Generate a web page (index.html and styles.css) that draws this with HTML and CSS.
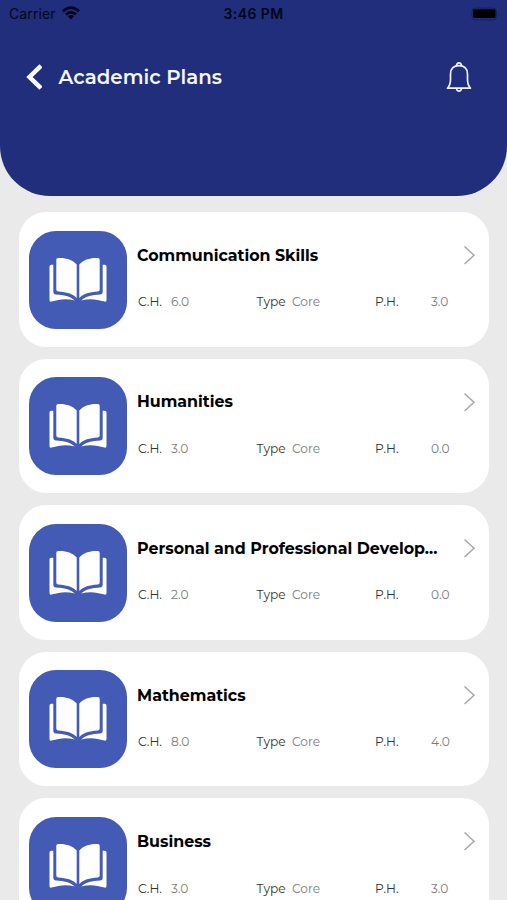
FILE: index.html
```
<!DOCTYPE html>
<html lang="en">
<head>
<meta charset="utf-8">
<title>Academic Plans</title>
<link rel="stylesheet" href="styles.css">
</head>
<body>
<svg width="0" height="0" class="defs">
  <symbol id="book" viewBox="0 0 98 98">
    <path d="M27.300 29q0-1.800 1.800-1.900c7-.6 13.900 1.400 18.600 6.400v33.500c-4-4.200-10-6-18.400-6.500q-2-.1-2-2z"/>
    <path d="M70.700 29q0-1.800-1.800-1.900c-7-.6-13.900 1.400-18.600 6.400v33.500c4-4.200 10-6 18.400-6.500q2-.1 2-2z"/>
    <path d="M20.500 35.500q0-1.800 1.800-1.800h2v26.700q0 2.800 2.700 3.100c8 .6 14 1.400 18.800 6-8-2.200-15-1.600-23.300 1.100q-2 .5-2-1.500z"/>
    <path d="M77.500 35.500q0-1.800-1.800-1.800h-2v26.700q0 2.800-2.700 3.100c-8 .6-14 1.400-18.800 6 8-2.200 15-1.600 23.300 1.100q2 .5 2-1.500z"/>
  </symbol>
  <symbol id="chevron" viewBox="0 0 14 20"><path d="M1.500 1.500 11 10.200 1.500 19" fill="none" stroke="#a8a8a8" stroke-width="1.500"/></symbol>
</svg>
<header class="header">
  <div class="status">
    <div class="carrier"><span>Carrier</span>
      <svg width="18" height="14" viewBox="0 0 18 14"><g fill="none" stroke="#03061a" stroke-width="2.700"><path d="M1 5.200q8-7 16 0"/><path d="M4 8.400q5-4.300 10 0"/></g><path d="M5.900 10.300q3.100-2.500 6.200 0L9 13.500z" fill="#03061a"/></svg>
    </div>
    <span class="time">3:46 PM</span>
    <svg class="battery" width="29" height="14" viewBox="0 0 29 14"><rect x="1" y="1" width="24.500" height="12" rx="3.500" fill="none" stroke="#17205e"/><rect x="2" y="2.300" width="22.500" height="8.800" rx="1.500" fill="#000"/><path d="M27 5v4q1.500-2 0-4" fill="#17205e"/></svg>
  </div>
  <div class="nav">
    <svg class="back" width="18" height="26" viewBox="0 0 18 26"><path d="M17 1.800 5.500 13 17 24.200" fill="none" stroke="#fff" stroke-width="4.500"/></svg>
    <h1>Academic Plans</h1>
    <svg class="bell" width="26" height="32" viewBox="0 0 26 32"><g fill="none" stroke="#f1f4ff" stroke-width="1.700" stroke-linejoin="round"><path d="M4.500 18.500V13C4.500 7.500 8 4.600 13 4.600s8.500 2.900 8.500 8.400v5.500c0 4 .8 6.300 3 8.700h-23c2.200-2.400 3-4.700 3-8.700z"/><path d="M10.600 4.900c-.3-4 5.100-4 4.800 0M10.500 27.500c.5 3.500 4.500 3.500 5 0"/></g></svg>
  </div>
</header>
<main class="plans">
  <article class="card"><div class="tile"><svg><use href="#book"/></svg></div><div class="info"><div class="top"><h2>Communication Skills</h2><svg class="chev"><use href="#chevron"/></svg></div><div class="facts"><b>C.H.</b><span>6.0</span><b>Type</b><span>Core</span><b>P.H.</b><span>3.0</span></div></div></article>
  <article class="card"><div class="tile"><svg><use href="#book"/></svg></div><div class="info"><div class="top"><h2>Humanities</h2><svg class="chev"><use href="#chevron"/></svg></div><div class="facts"><b>C.H.</b><span>3.0</span><b>Type</b><span>Core</span><b>P.H.</b><span>0.0</span></div></div></article>
  <article class="card"><div class="tile"><svg><use href="#book"/></svg></div><div class="info"><div class="top"><h2>Personal and Professional Develop...</h2><svg class="chev"><use href="#chevron"/></svg></div><div class="facts"><b>C.H.</b><span>2.0</span><b>Type</b><span>Core</span><b>P.H.</b><span>0.0</span></div></div></article>
  <article class="card"><div class="tile"><svg><use href="#book"/></svg></div><div class="info"><div class="top"><h2>Mathematics</h2><svg class="chev"><use href="#chevron"/></svg></div><div class="facts"><b>C.H.</b><span>8.0</span><b>Type</b><span>Core</span><b>P.H.</b><span>4.0</span></div></div></article>
  <article class="card"><div class="tile"><svg><use href="#book"/></svg></div><div class="info"><div class="top"><h2>Business</h2><svg class="chev"><use href="#chevron"/></svg></div><div class="facts"><b>C.H.</b><span>3.0</span><b>Type</b><span>Core</span><b>P.H.</b><span>3.0</span></div></div></article>
</main>
</body>
</html>
```
FILE: styles.css
```
* { box-sizing: border-box; }
body { margin: 0; height: 900px; overflow: hidden; background: #eaeaea; font-family: Montserrat, Inter, sans-serif; }
.defs { position: absolute; }
h1, h2 { margin: 0; white-space: nowrap; }
.header { height: 196px; background: #202e7c; border-radius: 0 0 50px 50px; }
.status { height: 28px; padding: 0 7px 0 9px; display: grid; grid-template-columns: 1fr auto 1fr; align-items: center; color: #03061a; font: 14px/28px Inter, sans-serif; }
.carrier { display: flex; align-items: center; gap: 6px; letter-spacing: .1px; }
.carrier svg { margin-top: -2px; }
.time { font-weight: 600; letter-spacing: .4px; margin-right: 2px; }
.battery { justify-self: end; }
.nav { display: flex; align-items: center; height: 98px; padding: 0 35.500px 0 24px; }
.back { margin-right: 16.500px; }
h1 { color: #f5f7ff; font-size: 19.800px; font-weight: 600; line-height: 26px; }
.bell { margin-left: auto; }
.plans { padding: 16px 18.500px 0 19px; display: grid; gap: 12px; }
.card { height: 134.600px; background: #fff; border-radius: 27px; padding: 18.500px 12px 0 10px; display: flex; gap: 10px; }
.tile { width: 98px; height: 98px; flex: none; background: #435bb5; border-radius: 27px; }
.tile svg { display: block; width: 98px; height: 98px; fill: #fff; }
.info { flex: 1; min-width: 0; }
.top { height: 49px; display: flex; justify-content: space-between; align-items: center; }
h2 { color: #000; font-size: 15.850px; font-weight: 700; line-height: 22px; padding-top: 1.600px; }
.chev { width: 14px; height: 20px; flex: none; }
.facts { height: 45.400px; padding-left: 1px; display: grid; grid-template-columns: 33px 85.500px 35.500px 83px 56px 30px; align-items: center; font-size: 12.200px; line-height: 18px; }
.facts b { color: #333; font-weight: 400; }
.facts span { color: #7c7c7c; font-weight: 400; }
```
